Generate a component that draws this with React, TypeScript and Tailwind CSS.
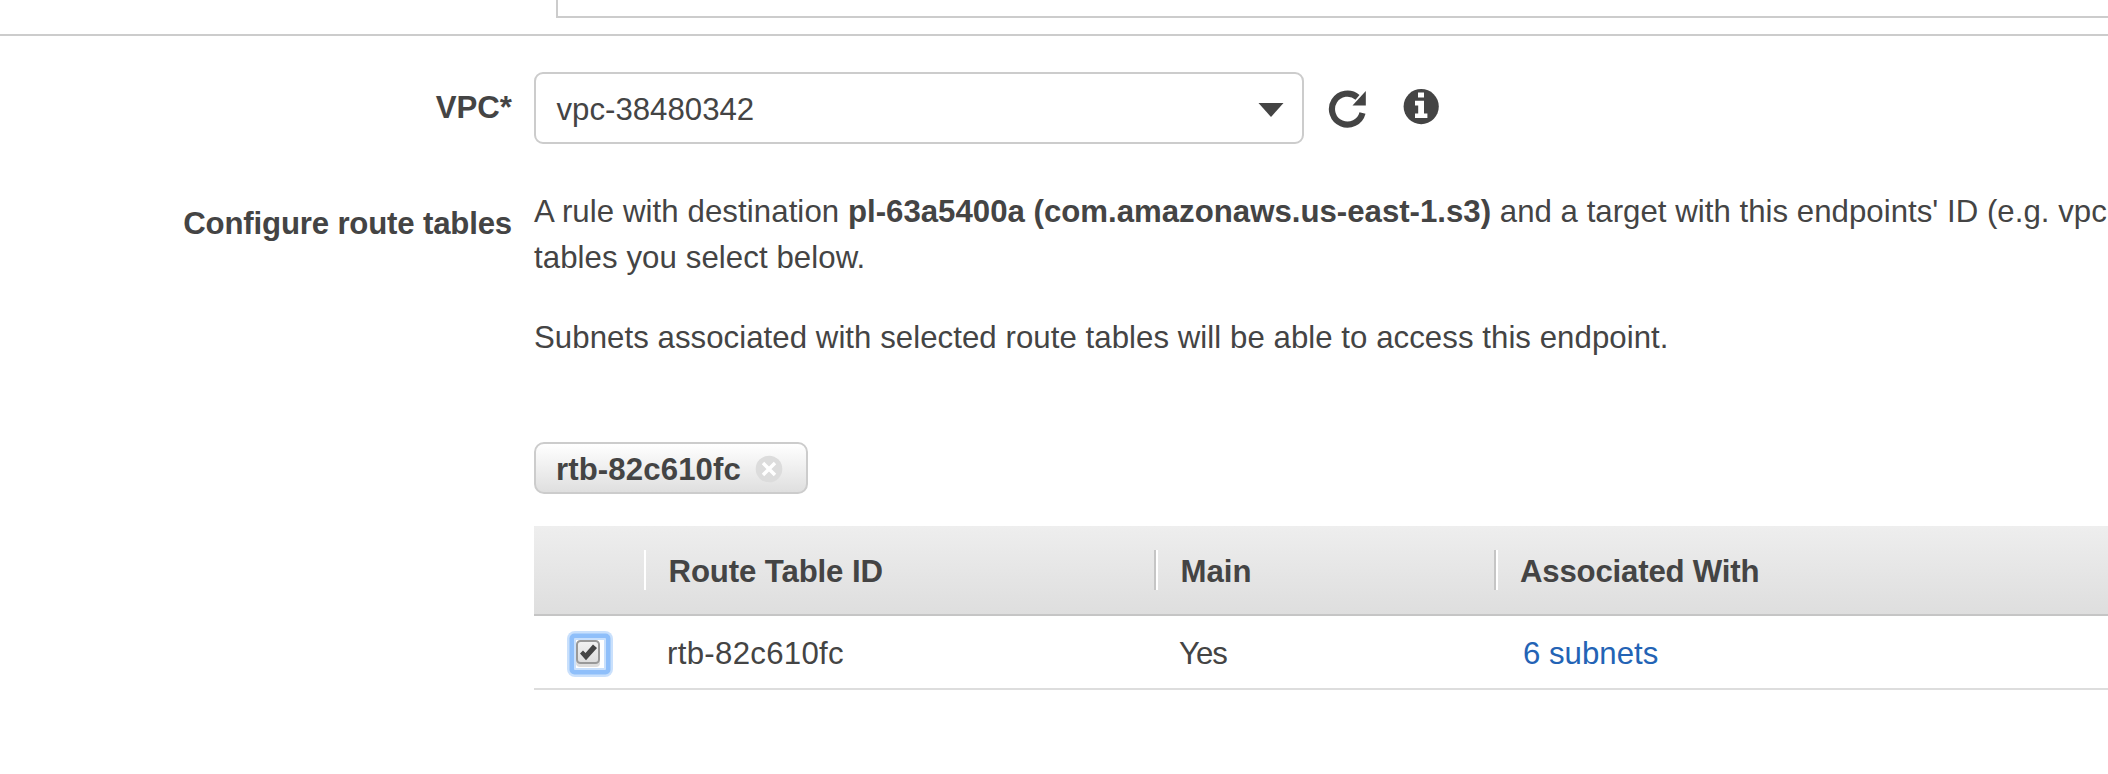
function RefreshIcon() {
  return (
    <svg className="mt-[17px] ml-[24px] h-[40px] w-[40px] shrink-0" viewBox="0 0 40 40">
      <path d="M34.5 23.9A15.5 15.5 0 1 1 29.5 8.3" fill="none" stroke="#444" strokeWidth="6.2" />
      <path d="M37.8 2V16.5H24.5Z" fill="#444" />
    </svg>
  );
}

function InfoIcon() {
  return (
    <svg className="mt-[17px] ml-[35px] h-[36px] w-[36px] shrink-0" viewBox="0 0 36 36">
      <circle cx="18.2" cy="17.6" r="17.6" fill="#444" />
      <path d="M15 3.6H21V8.6H15ZM12 11.8H21V24.4H24.4V29H12V24.4H15.2V16.4H12Z" fill="#fff" />
    </svg>
  );
}

function Checkbox() {
  return (
    <svg className="h-[46px] w-[46px]" viewBox="0 0 46 46" role="checkbox" aria-checked="true">
      <defs>
        <linearGradient id="box" x1="0" y1="0" x2="0" y2="1">
          <stop offset="0" stopColor="#f2f2f2" />
          <stop offset="1" stopColor="#dcdcdc" />
        </linearGradient>
      </defs>
      <rect width="46" height="46" rx="8" fill="#c9e0fc" />
      <rect x="2.5" y="2.5" width="41" height="41" rx="5" fill="#8fbffa" />
      <rect x="7" y="7" width="32" height="32" rx="1" fill="#c9e0fc" />
      <rect x="9" y="9" width="28" height="28" fill="#fff" />
      <rect x="9" y="11" width="24" height="25" rx="4" fill="#ddd" />
      <rect x="10" y="10" width="22" height="22" rx="3.5" fill="url(#box)" stroke="#999" strokeWidth="2" />
      <path d="M13 22.5L16 19.5L18.5 22L26 13.5L30 17L19 29.3Z" fill="#444" />
    </svg>
  );
}

export default function App() {
  return (
    <div className="flex h-[774px] w-[2108px] flex-col overflow-hidden bg-white font-['Liberation_Sans',Arial,sans-serif] text-[31.2px] leading-[46px] whitespace-nowrap text-[#444]">
      <div className="ml-[556px] h-[18px] shrink-0 border-b-2 border-l-2 border-[#ccc]" />
      <div className="mt-[16px] h-[2px] shrink-0 bg-[#ccc]" />
      <div className="mt-[36px] grid grid-cols-[512px_1574px] gap-x-[22px]">
        <label className="pt-[13px] text-right font-bold">VPC*</label>
        <div className="flex">
          <div className="flex h-[72px] w-[770px] items-center justify-between rounded-[9px] border-2 border-[#ccc] pr-[18px] pl-[20.5px]">
            <span className="pt-[4px]">vpc-38480342</span>
            <svg className="mt-[4px] h-[14px] w-[26px]" viewBox="0 0 26 14"><path d="M0.5 0H25.5L13 14Z" fill="#444" /></svg>
          </div>
          <RefreshIcon />
          <InfoIcon />
        </div>
        <label className="mt-[44px] pt-[13px] text-right font-bold tracking-[-0.18px]">Configure route tables</label>
        <div className="mt-[44px]">
          <p className="pt-px">
            <span className="tracking-[0.08px]">A rule with destination </span>
            <b>pl-63a5400a (com.amazonaws.us-east-1.s3)</b>
            <span className="tracking-[0.026px]"> and a target with this endpoints' ID (e.g. vpc</span>
            <br />
            <span className="tracking-[0.08px]">tables you select below.</span>
          </p>
          <p className="mt-[34px] tracking-[0.05px]">
            Subnets associated with selected route tables will be able to access this endpoint.
          </p>
          <div className="mt-[81px] flex h-[52px] w-[274px] items-center rounded-[10px] border-2 border-[#ccc] bg-gradient-to-b from-white to-[#dfdfdf] pl-[20px] font-bold">
            <span className="pt-[4px] tracking-[0.1px]">rtb-82c610fc</span>
            <svg className="mt-[2px] ml-[14px] h-[28px] w-[28px]" viewBox="0 0 28 28">
              <circle cx="14" cy="14" r="13.3" fill="#dcdcdc" />
              <path d="M8 8L20 20M20 8L8 20" stroke="#fff" strokeWidth="3.5" />
            </svg>
          </div>
          <div className="mt-[32px] grid h-[90px] grid-cols-[110px_512px_340px_1fr] items-center border-b-2 border-[#c5c5c5] bg-gradient-to-b from-[#eee] to-[#dedede] font-bold">
            <span />
            <div className="flex h-[40px] items-center border-l-2 border-white pl-[22.5px]">
              <span className="pt-[4px] tracking-[-0.12px]">Route Table ID</span>
            </div>
            <div className="flex h-[40px] items-center border-l-2 border-white pl-[22.5px] shadow-[-2px_0_0_#c5c5c5]">
              <span className="pt-[4px]">Main</span>
            </div>
            <div className="flex h-[40px] items-center border-l-2 border-white pl-[22px] shadow-[-2px_0_0_#c5c5c5]">
              <span className="pt-[4px] tracking-[-0.2px]">Associated With</span>
            </div>
          </div>
          <div className="grid h-[74px] grid-cols-[133px_512px_344px_1fr] items-center border-b-2 border-[#ddd] pt-[4px]">
            <div className="flex pl-[33px]"><Checkbox /></div>
            <span className="tracking-[0.3px]">rtb-82c610fc</span>
            <span className="tracking-[-1px]">Yes</span>
            <a className="text-[#2363b5]">6 subnets</a>
          </div>
        </div>
      </div>
    </div>
  );
}
